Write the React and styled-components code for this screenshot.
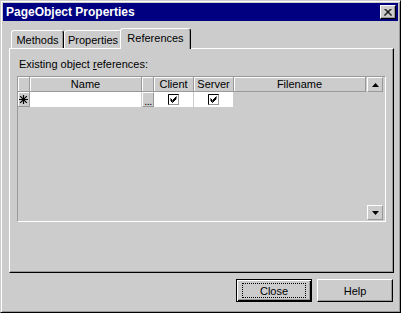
import React from 'react'
import styled, { createGlobalStyle } from 'styled-components'

const Global = createGlobalStyle`
  html, body {
    margin: 0;
    padding: 0;
    background: #cccccc;
  }
  body {
    font-family: "Liberation Sans", Arial, sans-serif;
    font-size: 11px;
    color: #000;
  }
`

const Window = styled.div`
  box-sizing: border-box;
  width: 401px;
  height: 313px;
  background: #cccccc;
  border: 1px solid;
  border-color: #cccccc #000 #000 #cccccc;
  box-shadow: inset 1px 1px #fff, inset -1px -1px #999;
  padding: 2px;
  display: flex;
  flex-direction: column;
`

const TitleBar = styled.div`
  height: 18px;
  background: #000080;
  display: flex;
  align-items: center;
  justify-content: space-between;
  padding: 0 2px 0 3px;
`

const Title = styled.span`
  color: #fff;
  font-weight: bold;
  font-size: 12px;
`

const CloseBox = styled.button`
  box-sizing: border-box;
  width: 16px;
  height: 14px;
  padding: 0;
  background: #cccccc;
  border: 1px solid;
  border-color: #fff #000 #000 #fff;
  box-shadow: inset -1px -1px #999;
  display: flex;
  align-items: center;
  justify-content: center;
`

const Body = styled.div`
  margin: 8px 4px 0 6px;
  display: flex;
  flex-direction: column;
`

const TabStrip = styled.div`
  display: flex;
  align-items: flex-end;
  height: 20px;
  padding-left: 2px;
  position: relative;
  z-index: 1;
`

const Tab = styled.div`
  box-sizing: border-box;
  height: ${p => (p.$active ? '21px' : '18px')};
  width: ${p => p.$w}px;
  margin: ${p => (p.$active ? '0 -2px 0 -2px' : '0 0 1px 0')};
  border: 1px solid;
  border-bottom: none;
  border-color: #fff #000 transparent #fff;
  border-radius: 3px 3px 0 0;
  box-shadow: inset -1px 0 #999;
  background: #cccccc;
  display: flex;
  justify-content: center;
  padding-top: 3px;
  position: relative;
  z-index: ${p => (p.$active ? 2 : 0)};
`

const Panel = styled.div`
  box-sizing: border-box;
  height: 225px;
  margin-top: -1px;
  border: 1px solid;
  border-color: #fff #000 #000 #fff;
  box-shadow: inset -1px -1px #999;
  padding: 9px 7px 0 7px;
  display: flex;
  flex-direction: column;
`

const Label = styled.div`
  padding-left: 2px;
  height: 13px;
  line-height: 13px;
  margin-bottom: 5px;
  u { text-decoration: underline; }
`

const Grid = styled.div`
  box-sizing: border-box;
  height: 146px;
  border: 1px solid;
  border-color: #999 #fff #fff #999;
  display: flex;
`

const Table = styled.div`
  display: grid;
  grid-template-columns: 12px 112px 12px 40px 40px 132px;
  grid-template-rows: 15px 15px;
  align-content: start;
`

const HeadCell = styled.div`
  box-sizing: border-box;
  border-right: 1px solid #999;
  border-bottom: 1px solid #999;
  box-shadow: inset 1px 1px #fff;
  text-align: center;
  line-height: 14px;
`

const Cell = styled.div`
  box-sizing: border-box;
  background: ${p => (p.$white ? '#fff' : '#cccccc')};
  border-right: ${p => (p.$white ? '1px solid #cccccc' : 'none')};
  display: flex;
  align-items: center;
  justify-content: center;
`

const Selector = styled.div`
  box-sizing: border-box;
  border-right: 1px solid #999;
  border-bottom: 1px solid #999;
  box-shadow: inset 1px 1px #fff;
  display: flex;
  align-items: center;
  justify-content: center;
`

const Dots = styled.div`
  box-sizing: border-box;
  border: 1px solid;
  border-color: #fff #999 #999 #fff;
  background: #cccccc;
  font-size: 11px;
  line-height: 16px;
  text-align: center;
  letter-spacing: -0.5px;
  overflow: hidden;
`

const ScrollBar = styled.div`
  width: 17px;
  display: flex;
  flex-direction: column;
  justify-content: space-between;
  align-items: flex-end;
  padding: 0 0 1px 0;
`

const ArrowBtn = styled.div`
  box-sizing: border-box;
  width: 16px;
  height: 15px;
  border: 1px solid;
  border-color: #fff #999 #999 #fff;
  background: #cccccc;
  display: flex;
  align-items: center;
  justify-content: center;
`

const Footer = styled.div`
  display: flex;
  justify-content: flex-end;
  gap: 5px;
  margin-top: 6px;
  padding-right: 1px;
`

const Button = styled.button`
  box-sizing: border-box;
  width: 76px;
  height: 23px;
  padding: 0;
  font-family: "Liberation Sans", Arial, sans-serif;
  font-size: 11px;
  color: #000;
  background: #cccccc;
  border: 1px solid;
  border-color: ${p => (p.$default ? '#000' : '#fff #000 #000 #fff')};
  box-shadow: ${p =>
    p.$default
      ? 'inset 1px 1px #fff, inset -1px -1px #000, inset -2px -2px #999'
      : 'inset -1px -1px #999'};
  display: flex;
  align-items: center;
  justify-content: center;
`

const Focus = styled.span`
  box-sizing: border-box;
  width: 64px;
  height: 15px;
  border: 1px dotted #000;
  display: flex;
  align-items: center;
  justify-content: center;
`

const Check = () => (
  <svg width="11" height="11" viewBox="0 0 11 11">
    <rect x="0.5" y="0.5" width="10" height="10" fill="#fff" stroke="#999" />
    <path d="M0.5 10.5V0.5H10.5" fill="none" stroke="#000" />
    <path d="M2.5 4.5l2 2 4-4M2.5 5.5l2 2 4-4M2.5 6.5l2 2 4-4" fill="none" stroke="#000" />
  </svg>
)

const Star = () => (
  <svg width="9" height="9" viewBox="0 0 9 9">
    <path d="M4.5 0v9M0 4.5h9M1.2 1.2l6.6 6.6M7.8 1.2l-6.6 6.6" stroke="#000" strokeWidth="1.2" />
  </svg>
)

export default function App() {
  return (
    <>
      <Global />
      <Window>
        <TitleBar>
          <Title>PageObject Properties</Title>
          <CloseBox>
            <svg width="8" height="7" viewBox="0 0 8 7">
              <path d="M0.5 0l7 7M1.5 0l6 6M7.5 0l-7 7M6.5 0l-6 6" stroke="#000" strokeWidth="1" />
            </svg>
          </CloseBox>
        </TitleBar>
        <Body>
          <TabStrip>
            <Tab $w={53}>Methods</Tab>
            <Tab $w={58}>Properties</Tab>
            <Tab $w={71} $active>References</Tab>
          </TabStrip>
          <Panel>
            <Label>
              Existing object <u>r</u>eferences:
            </Label>
            <Grid>
              <Table>
                <HeadCell />
                <HeadCell>Name</HeadCell>
                <HeadCell />
                <HeadCell>Client</HeadCell>
                <HeadCell>Server</HeadCell>
                <HeadCell>Filename</HeadCell>
                <Selector>
                  <Star />
                </Selector>
                <Cell $white />
                <Dots>...</Dots>
                <Cell $white>
                  <Check />
                </Cell>
                <Cell $white>
                  <Check />
                </Cell>
                <Cell />
              </Table>
              <ScrollBar>
                <ArrowBtn>
                  <svg width="7" height="4" viewBox="0 0 7 4">
                    <path d="M3.5 0L7 4H0z" fill="#000" />
                  </svg>
                </ArrowBtn>
                <ArrowBtn>
                  <svg width="7" height="4" viewBox="0 0 7 4">
                    <path d="M0 0h7L3.5 4z" fill="#000" />
                  </svg>
                </ArrowBtn>
              </ScrollBar>
            </Grid>
          </Panel>
          <Footer>
            <Button $default>
              <Focus>Close</Focus>
            </Button>
            <Button>Help</Button>
          </Footer>
        </Body>
      </Window>
    </>
  )
}
